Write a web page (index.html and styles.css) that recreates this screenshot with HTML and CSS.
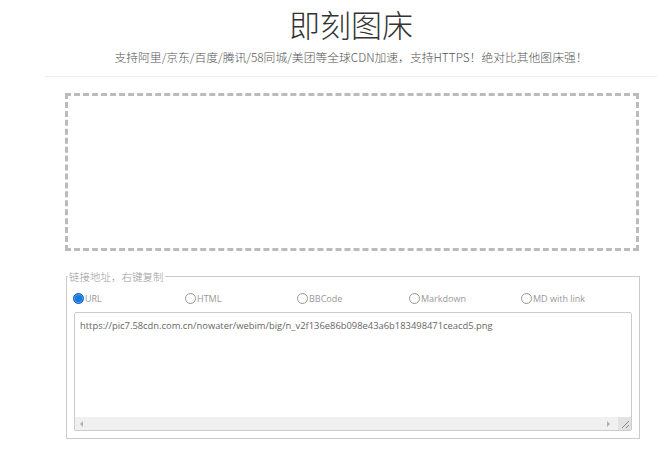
FILE: index.html
```html
<!DOCTYPE html>
<html lang="zh-cn">
<head>
  <meta charset="UTF-8">
  <meta name="viewport" content="width=device-width, initial-scale=1.0">
  <title>即刻图床</title>
  <link rel="stylesheet" href="styles.css">
</head>
<body>
  <div class="page">
    <div class="header">
      <h1>即刻图床</h1>
      <p class="subtitle">支持阿里/京东/百度/腾讯/58同城/美团等全球CDN加速，支持HTTPS！绝对比其他图床强！</p>
    </div>
    <hr class="line">

    <div class="drop"></div>

    <fieldset class="links">
      <legend>链接地址，右键复制</legend>
      <div class="types">
        <label class="type"><input type="radio" name="type" checked>URL</label>
        <label class="type"><input type="radio" name="type">HTML</label>
        <label class="type"><input type="radio" name="type">BBCode</label>
        <label class="type"><input type="radio" name="type">Markdown</label>
        <label class="type"><input type="radio" name="type">MD with link</label>
      </div>
      <div class="result">
        <textarea class="result-text" wrap="off">https://pic7.58cdn.com.cn/nowater/webim/big/n_v2f136e86b098e43a6b183498471ceacd5.png</textarea>
        <div class="hscroll">
          <span class="arrow left"></span>
          <span class="track"></span>
          <span class="arrow right"></span>
          <span class="grip">
            <svg width="13" height="13" viewBox="0 0 13 13">
              <path d="M4 11 L11 4 M8 11 L11 8" stroke="#8a8a8a" stroke-width="1" fill="none"/>
            </svg>
          </span>
        </div>
      </div>
    </fieldset>
  </div>
</body>
</html>
```

FILE: styles.css
```css
body{
  margin: 0;
  padding: 0;
  font-family: "Open Sans", "Noto Sans CJK SC", sans-serif;
  background-color: #fff;
}
.page{
  padding: 0 14px 0 45px;
}
.header{
  text-align: center;
}
h1{
  margin: 0;
  padding-top: 4px;
  font-family: "Noto Sans CJK SC", sans-serif;
  font-size: 31px;
  font-weight: 300;
  line-height: 40px;
  color: #333;
}
.subtitle{
  margin: 4px 0 0;
  font-family: "Noto Sans CJK SC", sans-serif;
  font-size: 11.8px;
  font-weight: 300;
  line-height: 18px;
  color: #555;
}
.line{
  margin: 10px 0 0;
  border: 0;
  border-top: 1px solid #eee;
}
.drop{
  margin: 16px 18px 0 20px;
  height: 152px;
  border: 3px dashed #bbb;
}
.links{
  margin: 18px 19px 0 21px;
  padding: 0 6px 7px 6px;
  border: 1px solid #ccc;
}
.links legend{
  margin-left: -5px;
  padding: 0 1px;
  font-family: "Noto Sans CJK SC", sans-serif;
  font-size: 10.5px;
  font-weight: 300;
  line-height: 15px;
  color: #999;
}
.types{
  display: flex;
  height: 28px;
  align-items: center;
}
.type{
  width: 112px;
  display: flex;
  align-items: center;
  font-size: 9px;
  color: #999;
}
.type input{
  appearance: none;
  margin: 0 1px 0 0;
  width: 11px;
  height: 11px;
  border: 1px solid #999;
  border-radius: 50%;
  box-sizing: border-box;
}
.type input:checked{
  border-color: #0a60c8;
  background-color: #1778e0;
  box-shadow: inset 0 0 0 1px #5aa2ee;
}
.result{
  display: flex;
  flex-direction: column;
  box-sizing: border-box;
  width: 558px;
  height: 119px;
  margin: 0 0 0 1px;
  border: 1px solid #ccc;
  border-radius: 2px;
}
.result-text{
  flex: 1;
  margin: 0;
  padding: 6px 5px;
  border: 0;
  outline: none;
  font-family: "Open Sans", sans-serif;
  font-size: 9.4px;
  line-height: 14px;
  color: #666;
  white-space: pre;
  overflow: hidden;
  resize: none;
}
.hscroll{
  display: flex;
  height: 13px;
  background-color: #f0f0f0;
}
.arrow{
  width: 13px;
  display: flex;
  align-items: center;
  justify-content: center;
}
.arrow::before{
  content: "";
  border-top: 3px solid transparent;
  border-bottom: 3px solid transparent;
}
.arrow.left::before{
  border-right: 3px solid #b0b0b0;
}
.arrow.right::before{
  border-left: 3px solid #b0b0b0;
}
.track{
  flex: 1;
}
.grip{
  width: 13px;
  height: 13px;
  margin-left: 3px;
  background-color: #e2e2e2;
}
.grip svg{
  display: block;
}
```
